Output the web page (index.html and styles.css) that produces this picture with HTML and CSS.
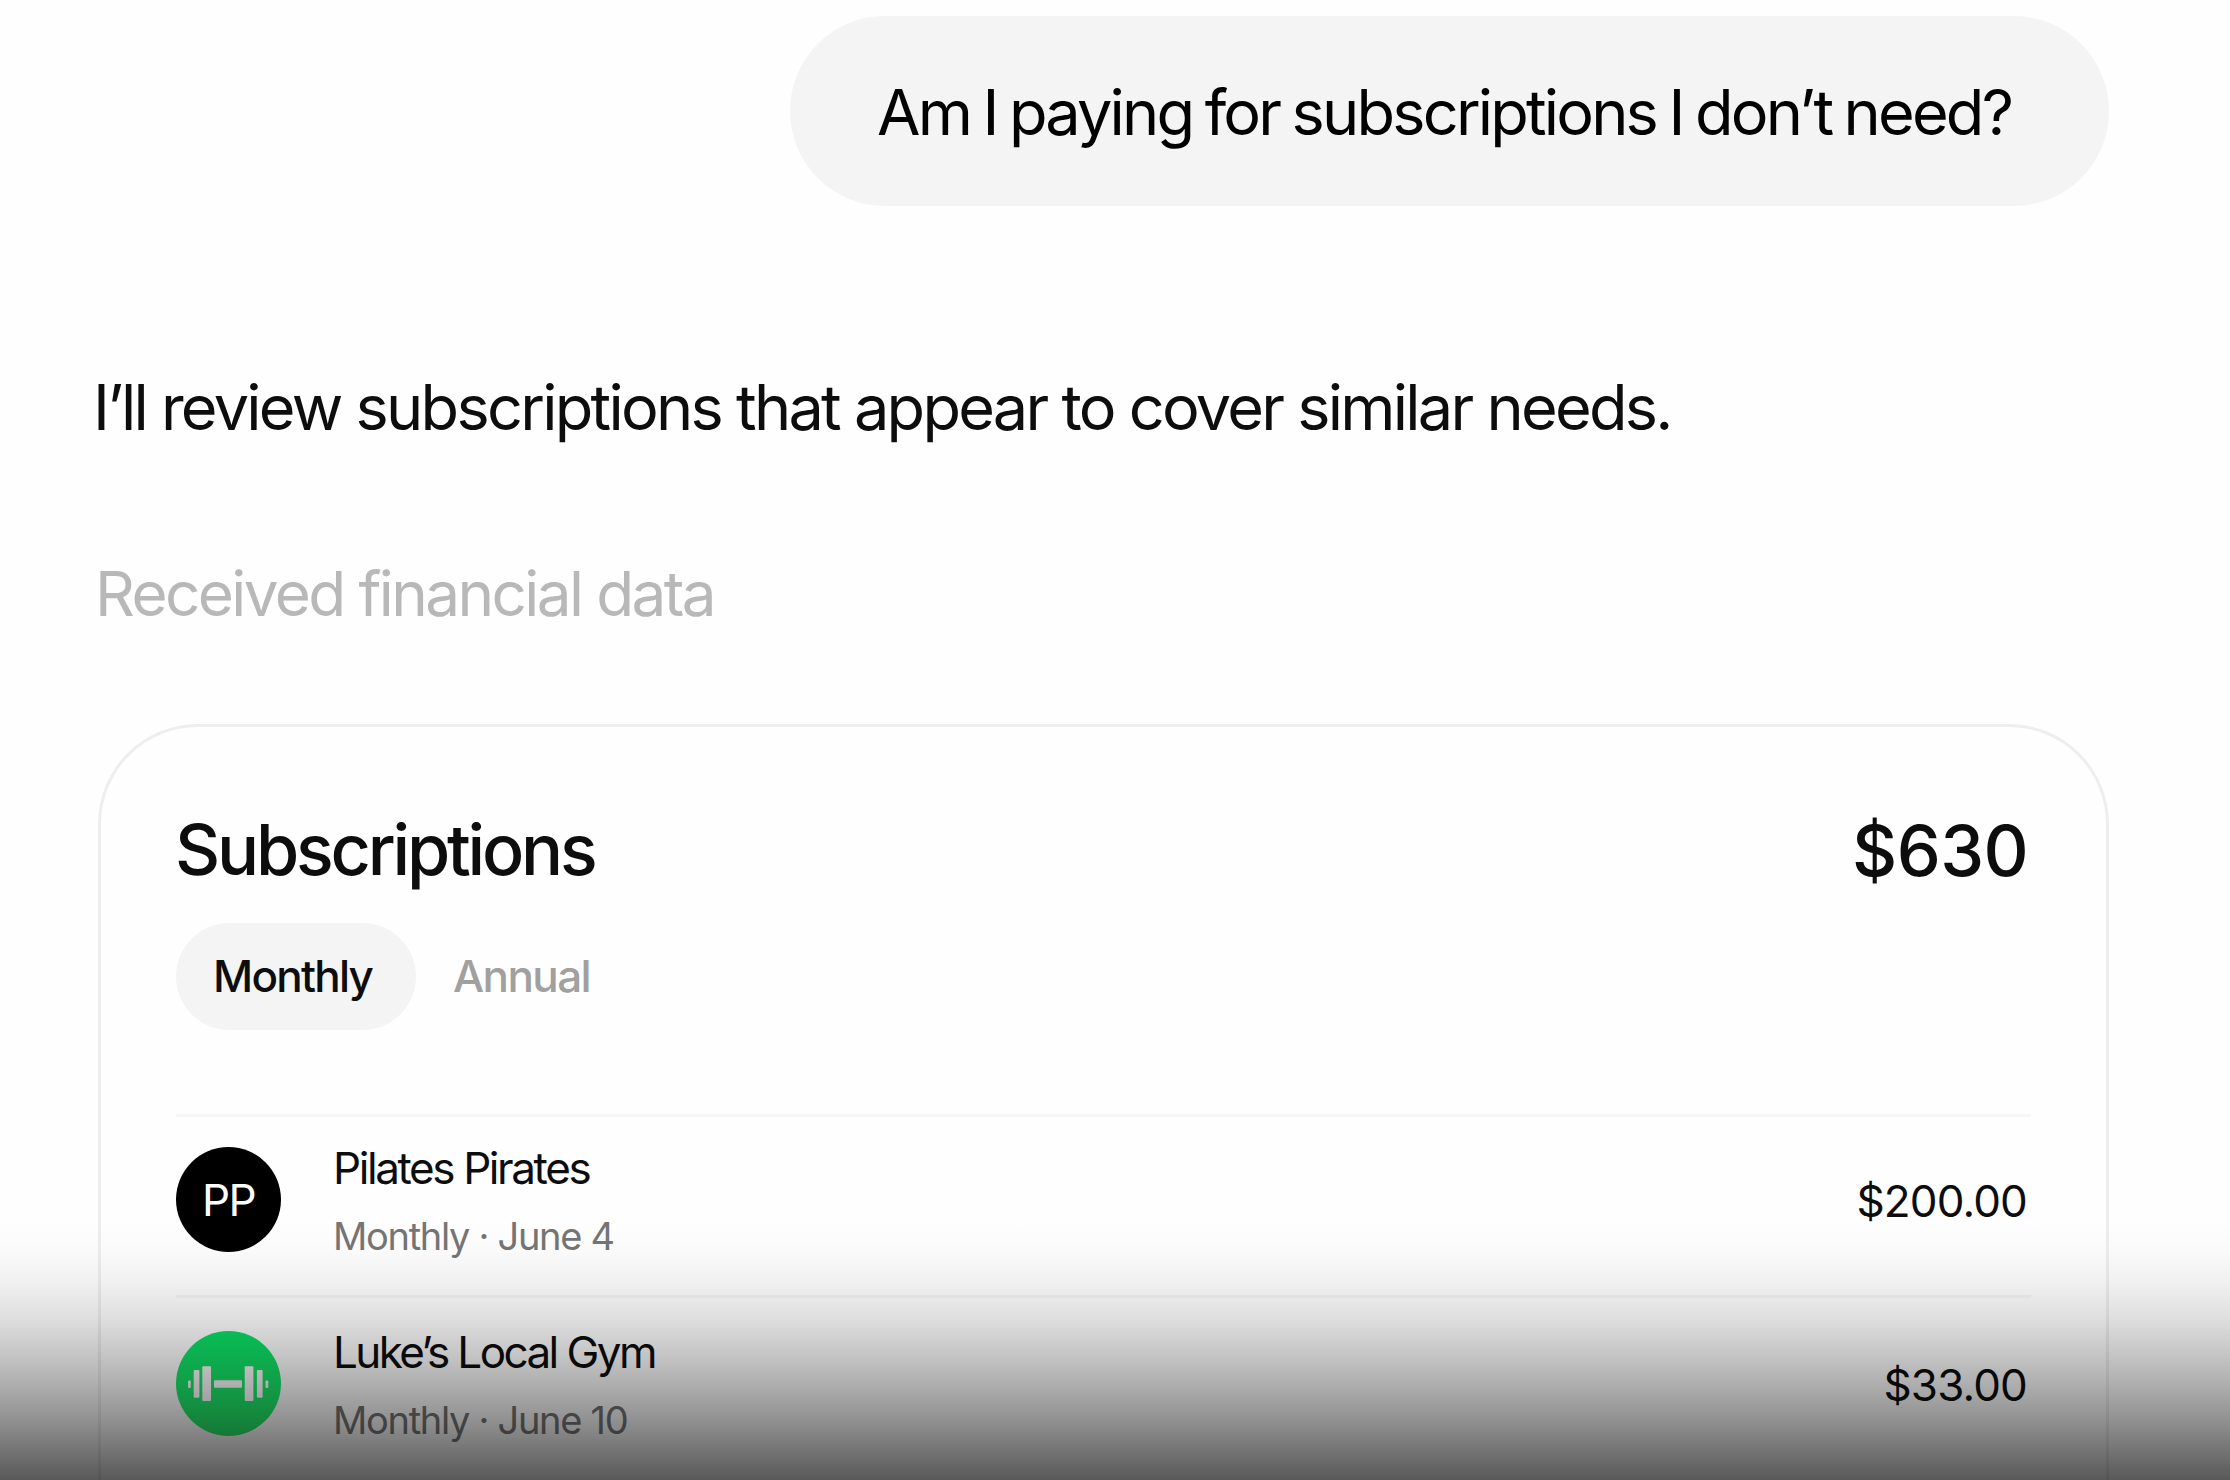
FILE: index.html
```html
<!DOCTYPE html>
<html lang="en">
<head>
    <meta charset="UTF-8">
    <title>Subscriptions</title>
    <link rel="stylesheet" href="styles.css">
</head>
<body>
<div class="chat">
    <div class="question">Am I paying for subscriptions I don’t need?</div>
    <p class="answer">I’ll review subscriptions that appear to cover similar needs.</p>
    <p class="status">Received financial data</p>

    <div class="card">
        <div class="card-head">
            <h2>Subscriptions</h2>
            <span class="total">$630</span>
        </div>
        <div class="tabs">
            <span class="tab current">Monthly</span>
            <span class="tab">Annual</span>
        </div>
        <ul class="list">
            <li>
                <div class="avatar">PP</div>
                <div class="info">
                    <p class="name pilates">Pilates Pirates</p>
                    <p class="date">Monthly · June 4</p>
                </div>
                <span class="price">$200.00</span>
            </li>
            <li>
                <div class="avatar gym">
                    <svg width="105" height="105" viewBox="0 0 105 105" fill="#fff">
                        <rect x="12" y="49.5" width="2.8" height="7.5" rx="1"/>
                        <rect x="17.7" y="39" width="5.7" height="27.7" rx="1"/>
                        <rect x="26.3" y="35.3" width="8.7" height="34.7" rx="1"/>
                        <rect x="38" y="49.3" width="28" height="7.5" rx="1"/>
                        <rect x="68.7" y="35.3" width="8.7" height="34.7" rx="1"/>
                        <rect x="80.9" y="39" width="5.7" height="27.7" rx="1"/>
                        <rect x="89.5" y="49.5" width="2.8" height="7.5" rx="1"/>
                    </svg>
                </div>
                <div class="info">
                    <p class="name">Luke’s Local Gym</p>
                    <p class="date">Monthly · June 10</p>
                </div>
                <span class="price">$33.00</span>
            </li>
        </ul>
    </div>
</div>
<div class="shade"></div>
</body>
</html>
```
FILE: styles.css
```css
* {
    padding: 0;
    margin: 0;
    list-style: none;
    box-sizing: border-box;
}

body {
    height: 1480px;
    overflow: hidden;
    position: relative;
    background: #fefefe;
    color: #0d0d0d;
    font-family: Inter, "Liberation Sans", sans-serif;
    white-space: nowrap;
}

.chat {
    display: flex;
    flex-direction: column;
    width: 2011px;
    height: 1480px;
    margin-left: 98px;
    padding-top: 16px;
}

.question {
    align-self: flex-end;
    width: 1319px;
    height: 190px;
    padding: 1px 0 0 87px;
    border-radius: 95px;
    background: #f4f4f4;
    color: #000;
    font-size: 63px;
    line-height: 190px;
    letter-spacing: -2.81px;
    word-spacing: -2.5px;
}

.answer {
    margin: 163px 0 0 -5px;
    font-size: 63px;
    line-height: 76px;
    letter-spacing: -2.73px;
}

.status {
    margin: 111px 0 0 -3px;
    color: #b8b8b8;
    font-size: 62px;
    line-height: 76px;
    letter-spacing: -2.6px;
}

.card {
    flex: 1;
    margin-top: 92px;
    padding: 81px 75px 0;
    border: 3px solid #eee;
    border-bottom: 0;
    border-radius: 100px 100px 0 0;
}

.card-head {
    display: flex;
    justify-content: space-between;
    padding-right: 3px;
    font-size: 70px;
    line-height: 84px;
}

.card-head h2 {
    margin-left: -1px;
    font-size: 70px;
    font-weight: 500;
    letter-spacing: -3.2px;
}

.total {
    padding-top: 1px;
    font-weight: 500;
    letter-spacing: -0.6px;
}

.tabs {
    display: flex;
    gap: 37px;
    margin-top: 30px;
}

.tab {
    font-size: 44px;
    font-weight: 500;
    line-height: 107px;
    letter-spacing: -1.6px;
    color: #a0a0a0;
}

.tab.current {
    width: 240px;
    padding-left: 37px;
    border-radius: 54px;
    background: #f4f4f4;
    color: #0d0d0d;
    letter-spacing: -1.75px;
}

.list {
    margin-top: 84px;
}

.list li {
    display: flex;
    align-items: center;
    height: 181px;
    padding: 23px 4px 36px 0;
    border-top: 3px solid #f6f6f6;
}

.list li + li {
    padding-top: 26px;
    padding-bottom: 33px;
}

.avatar {
    width: 105px;
    height: 105px;
    padding-top: 1px;
    border-radius: 50%;
    background: #000;
    color: #fff;
    font-size: 44px;
    line-height: 105px;
    text-align: center;
    letter-spacing: -1.5px;
}

.avatar.gym {
    padding: 0;
    background: linear-gradient(#08e065, #28ea6a);
}

.avatar svg {
    display: block;
}

.info {
    flex: 1;
    margin-left: 52px;
}

.name {
    font-size: 44px;
    line-height: 54px;
    letter-spacing: -2.57px;
}

.name.pilates {
    letter-spacing: -2.4px;
}

.date {
    margin-top: 18px;
    color: #757575;
    font-size: 38px;
    line-height: 46px;
    letter-spacing: -1.3px;
}

.price {
    padding-top: 3px;
    font-size: 44px;
    letter-spacing: -0.86px;
}

/* dark fade over the bottom of the conversation */
.shade {
    position: absolute;
    left: 0;
    right: 0;
    bottom: 0;
    height: 260px;
    background: linear-gradient(
        rgba(0, 0, 0, 0) 0,
        rgba(0, 0, 0, 0.015) 30px,
        rgba(0, 0, 0, 0.055) 63px,
        rgba(0, 0, 0, 0.12) 97px,
        rgba(0, 0, 0, 0.21) 130px,
        rgba(0, 0, 0, 0.31) 163px,
        rgba(0, 0, 0, 0.42) 197px,
        rgba(0, 0, 0, 0.54) 230px,
        rgba(0, 0, 0, 0.65) 260px
    );
}
```
